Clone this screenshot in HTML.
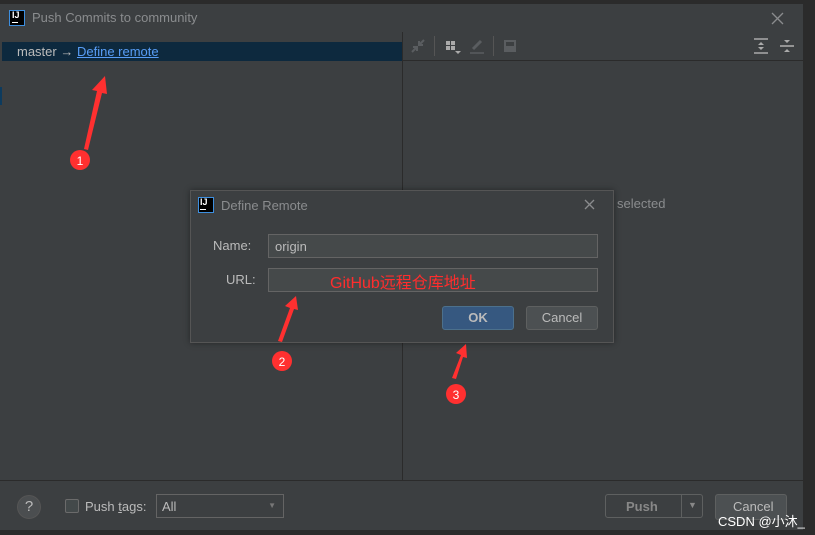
<!DOCTYPE html>
<html><head><meta charset="utf-8"><style>
*{margin:0;padding:0;box-sizing:border-box}
body{width:815px;height:535px;background:#2b2b2b;position:relative;overflow:hidden;font-family:"Liberation Sans","Noto Sans CJK SC",sans-serif;font-size:13px;color:#bbbbbb}
.a{position:absolute}
</style></head><body>
<div class="a" style="left:0;top:4px;width:803px;height:526px;background:#3c3f41"></div>
<div class="a" style="left:9px;top:10px;width:16px;height:16px;background:#000;border:1px solid #3d8fe0"></div>
<div class="a" style="left:12px;top:10px;color:#fff;font-size:9px;font-weight:bold">IJ</div>
<div class="a" style="left:12px;top:22px;width:6px;height:1px;background:#fff"></div>
<div class="a" style="left:32px;top:10px;color:#8a8c8e">Push Commits to community</div>
<svg class="a" style="left:771px;top:12px" width="13" height="13"><path d="M1 1L12 12M12 1L1 12" stroke="#8a8c8e" stroke-width="1.3"/></svg>
<div class="a" style="left:2px;top:32px;width:400px;height:448px;background:#3c3f41"></div>
<div class="a" style="left:402px;top:32px;width:1px;height:448px;background:#2b2b2b"></div>
<div class="a" style="left:2px;top:42px;width:400px;height:19px;background:#0d293e"></div>
<div class="a" style="left:0;top:87px;width:2px;height:18px;background:#0d3b5e"></div>
<div class="a" style="left:17px;top:44px;color:#bbb">master → <span style="color:#589df6;text-decoration:underline">Define remote</span></div>
<div class="a" style="left:403px;top:60px;width:400px;height:1px;background:#2b2b2b"></div>
<svg class="a" style="left:410px;top:38px" width="16" height="16"><path d="M2 14L7 9M9 7L14 2M3 9H7V13M9 3V7H13" stroke="#5a5d60" stroke-width="2" fill="none"/></svg>
<div class="a" style="left:434px;top:36px;width:1px;height:20px;background:#555"></div>
<div class="a" style="left:446px;top:41px;width:4px;height:4px;background:#aaa;box-shadow:5px 0 #aaa,0 5px #aaa,5px 5px #aaa"></div>
<div class="a" style="left:455px;top:51px;width:0;height:0;border-left:3px solid transparent;border-right:3px solid transparent;border-top:3px solid #aaa"></div>
<svg class="a" style="left:469px;top:38px" width="16" height="16"><path d="M4 11L12 3" stroke="#5a5d60" stroke-width="3"/><path d="M1 15H15" stroke="#5a5d60" stroke-width="1.5"/></svg>
<div class="a" style="left:493px;top:36px;width:1px;height:20px;background:#555"></div>
<div class="a" style="left:504px;top:40px;width:12px;height:12px;background:#5a5d60"></div>
<div class="a" style="left:506px;top:42px;width:8px;height:4px;background:#3c3f41"></div>
<svg class="a" style="left:754px;top:38px" width="14" height="16"><path d="M0 1H14M0 15H14" stroke="#aaa" stroke-width="1.6"/><path d="M4 7L7 4L10 7ZM4 9L7 12L10 9Z" fill="#aaa"/></svg>
<svg class="a" style="left:780px;top:38px" width="14" height="16"><path d="M0 8H14" stroke="#aaa" stroke-width="1.6"/><path d="M4 2H10L7 5ZM4 14H10L7 11Z" fill="#aaa"/></svg>
<div class="a" style="left:617px;top:196px;color:#8a8c8e">selected</div>
<div class="a" style="left:0;top:480px;width:803px;height:1px;background:#2b2b2b"></div>
<div class="a" style="left:17px;top:495px;width:24px;height:24px;border-radius:50%;background:#4b4e50;border:1px solid #555;color:#bbb;text-align:center;line-height:22px;font-size:15px">?</div>
<div class="a" style="left:65px;top:499px;width:14px;height:14px;border:1px solid #6b6b6b;background:#43494a;border-radius:2px"></div>
<div class="a" style="left:85px;top:499px">Push <u>t</u>ags:</div>
<div class="a" style="left:156px;top:494px;width:128px;height:24px;border:1px solid #646464;background:#3c3f41;padding:4px 5px">All<span style="position:absolute;right:7px;top:6px;font-size:8px;color:#777">▼</span></div>
<div class="a" style="left:605px;top:494px;width:98px;height:24px;border:1px solid #5e6060;border-radius:3px;background:#3c3f41"></div>
<div class="a" style="left:626px;top:499px;color:#888;font-weight:bold">Push</div>
<div class="a" style="left:681px;top:495px;width:1px;height:22px;background:#5e6060"></div>
<div class="a" style="left:688px;top:500px;font-size:9px;color:#888">▼</div>
<div class="a" style="left:715px;top:494px;width:72px;height:26px;border:1px solid #5e6060;border-radius:3px;background:#4c5052"></div>
<div class="a" style="left:733px;top:499px;color:#bbb">Cancel</div>
<div class="a" style="left:718px;top:511px;color:#fff;font-size:13px">CSDN @小沐_</div>
<div class="a" style="left:190px;top:190px;width:424px;height:153px;background:#3c3f41;border:1px solid #555;box-shadow:0 0 6px rgba(0,0,0,.4)"></div>
<div class="a" style="left:198px;top:197px;width:16px;height:16px;background:#000;border:1px solid #3d8fe0"></div>
<div class="a" style="left:200px;top:197px;color:#fff;font-size:9px;font-weight:bold">IJ</div>
<div class="a" style="left:200px;top:209px;width:6px;height:1px;background:#fff"></div>
<div class="a" style="left:221px;top:198px;color:#8a8c8e">Define Remote</div>
<svg class="a" style="left:584px;top:199px" width="11" height="11"><path d="M1 1L10 10M10 1L1 10" stroke="#8a8c8e" stroke-width="1.3"/></svg>
<div class="a" style="left:213px;top:238px">Name:</div>
<div class="a" style="left:268px;top:234px;width:330px;height:24px;border:1px solid #646464;background:#45494a;padding:4px 6px;color:#bbb">origin</div>
<div class="a" style="left:226px;top:272px">URL:</div>
<div class="a" style="left:268px;top:268px;width:330px;height:24px;border:1px solid #646464;background:#45494a"></div>
<div class="a" style="left:330px;top:269px;color:#ff2d2d;font-size:16px">GitHub远程仓库地址</div>
<div class="a" style="left:442px;top:306px;width:72px;height:24px;border:1px solid #4c708c;border-radius:3px;background:#365880;color:#bbb;font-weight:bold;text-align:center;line-height:22px">OK</div>
<div class="a" style="left:526px;top:306px;width:72px;height:24px;border:1px solid #5e6060;border-radius:3px;background:#4c5052;color:#bbb;text-align:center;line-height:22px">Cancel</div>
<svg class="a" style="left:0;top:0" width="815" height="535">
<g fill="#ff3030">
<polygon points="84,149 97,91 92,90 105,76 107,94 102,93 88,150"/>
<circle cx="80" cy="160" r="10"/>
<polygon points="278,341 290,308 285,306 296,296 298,310 294,309 282,342"/>
<circle cx="282" cy="361" r="10"/>
<polygon points="452,378 461,355 456,353 466,344 467,358 463,357 456,379"/>
<circle cx="456" cy="394" r="10"/>
</g>
<g fill="#fff" font-size="12" font-family="Liberation Sans" text-anchor="middle">
<text x="80" y="165">1</text><text x="282" y="366">2</text><text x="456" y="399">3</text>
</g>
</svg>
</body></html>
